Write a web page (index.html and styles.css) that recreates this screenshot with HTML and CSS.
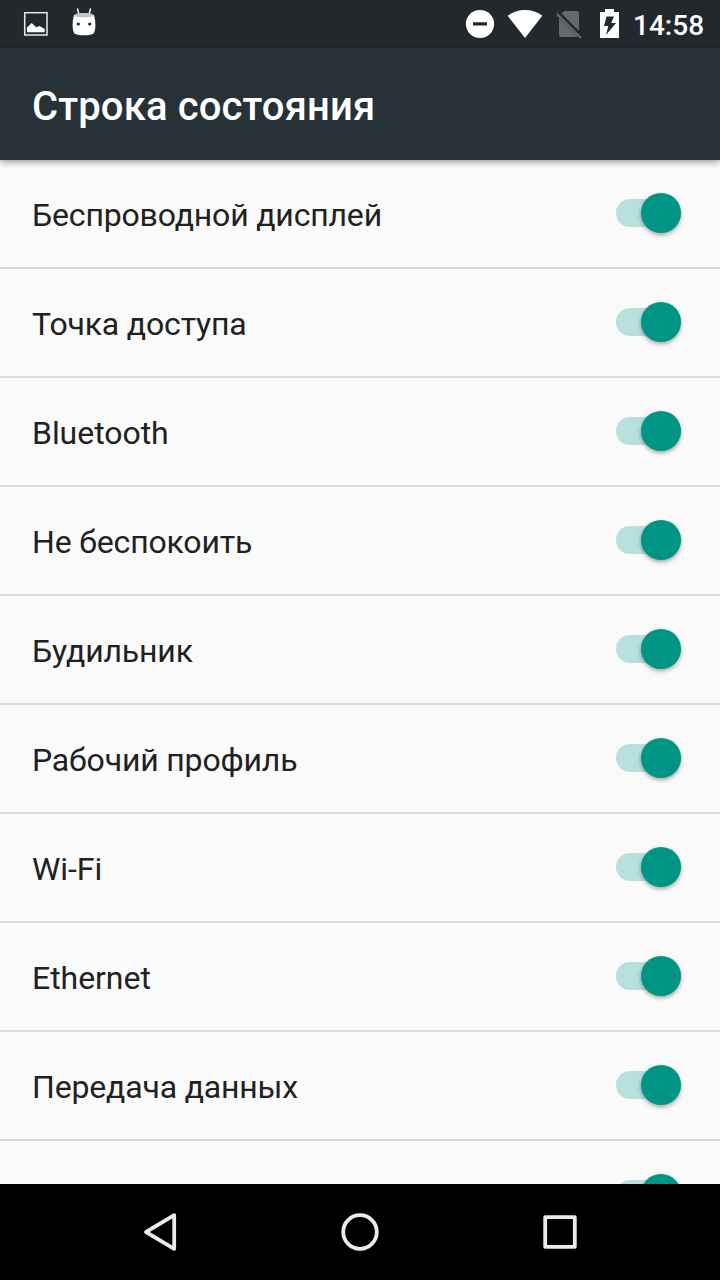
FILE: index.html
```html
<!DOCTYPE html>
<html lang="ru">
<head>
<meta charset="utf-8">
<title>Строка состояния</title>
<link rel="stylesheet" href="styles.css">
</head>
<body>
<div class="screen">
  <div class="status">
    <svg class="status-left" width="120" height="48" viewBox="0 0 120 48">
      <rect x="24.7" y="12.7" width="22.3" height="22.3" fill="none" stroke="#e9eaea" stroke-width="1.5"/>
      <path d="M27 32.300v-4.800l4.700-4.400 4.600 4.200 3.200-1.200 5.200 3v3.200z" fill="#fff"/>
      <path d="M77.500 9l1.500 5.500M90.500 9l-1.500 5.500" stroke="#fff" stroke-width="1.400" stroke-linecap="round"/>
      <path d="M74 15Q84 11.500 94 15Q95.500 20 95.400 25Q95.400 31 93.500 33.500Q91.500 35.300 84 35.300Q76.500 35.300 74.500 33.500Q72.600 31 72.600 25Q72.500 20 74 15z" fill="#fff"/>
      <ellipse cx="84" cy="15.200" rx="9.600" ry="2.300" fill="#c4c4c4"/>
      <circle cx="78.300" cy="24" r="1.600" fill="#23282c"/><circle cx="89.700" cy="24" r="1.600" fill="#23282c"/>
    </svg>
    <svg class="status-right" width="170" height="48" viewBox="455 0 170 48">
      <circle cx="480" cy="24" r="14.100" fill="#fff"/>
      <rect x="473" y="22.300" width="14" height="3.200" fill="#23282c"/>
      <path d="M525 38L507.700 15.800Q515 10 525 10T542.300 15.800z" fill="#fff"/>
      <path d="M564.500 11H576.500Q579 11 579 13.500V32.700L560.500 14.500zM559 18L577.500 36.500Q577 37 576 37H561.500Q559 37 559 34.500z" fill="#66696c"/>
      <path d="M556.800 13.800L581 38" stroke="#66696c" stroke-width="2.300"/>
      <path d="M559.800 13.300L580 33.500" stroke="#23282c" stroke-width="2.200"/>
      <path d="M600 12h5V9h9v3h5v26h-19z" fill="#fff"/>
      <path d="M606.500 16.500H614L611.200 23H616L606 35L608.300 26H604z" fill="#23282c"/>
    </svg>
    <span class="clock">14:58</span>
  </div>
  <header class="toolbar"><h1 class="title">Строка состояния</h1></header>
  <main class="list">
    <div class="row"><span>Беспроводной дисплей</span><i class="switch"></i></div>
    <div class="row"><span>Точка доступа</span><i class="switch"></i></div>
    <div class="row"><span class="latin">Bluetooth</span><i class="switch"></i></div>
    <div class="row"><span>Не беспокоить</span><i class="switch"></i></div>
    <div class="row"><span>Будильник</span><i class="switch"></i></div>
    <div class="row"><span>Рабочий профиль</span><i class="switch"></i></div>
    <div class="row"><span class="latin">Wi-Fi</span><i class="switch"></i></div>
    <div class="row"><span class="latin">Ethernet</span><i class="switch"></i></div>
    <div class="row"><span>Передача данных</span><i class="switch"></i></div>
    <div class="row"><span></span><i class="switch"></i></div>
  </main>
  <nav class="navbar">
    <svg width="720" height="96" viewBox="0 1184 720 96" fill="none" stroke="#ebebeb" stroke-width="3.800" stroke-linejoin="round">
      <path d="M146 1232L174.200 1215.200V1248.800z"/>
      <circle cx="360" cy="1232" r="16.800"/>
      <rect x="545.200" y="1217.200" width="29.600" height="29.600"/>
    </svg>
  </nav>
</div>
</body>
</html>
```
FILE: styles.css
```css
body {
  margin: 0;
  font-family: Roboto, "Noto Sans", sans-serif;
}

.screen {
  display: flex;
  flex-direction: column;
  width: 720px;
  height: 1280px;
  overflow: hidden;
  background: #fafafa;
}

.status {
  display: flex;
  flex: none;
  height: 48px;
  background: #23282c;
}

.status-right {
  margin-left: auto;
}

.clock {
  width: 87px;
  margin-left: 8px;
  font-size: 28px;
  font-weight: 500;
  line-height: 52px;
  color: #fff;
}

.toolbar {
  position: relative;
  z-index: 1;
  display: flex;
  flex: none;
  align-items: center;
  height: 112px;
  padding: 0 32px;
  box-sizing: border-box;
  background: #263238;
  box-shadow: 0 2px 7px rgba(0, 0, 0, 0.4);
}

.title {
  margin: 6px 0 0;
  font-size: 40px;
  font-weight: 500;
  line-height: 48px;
  letter-spacing: 0.13px;
  color: #fff;
}

.list {
  flex: 1;
  min-height: 0;
  overflow: hidden;
}

.row {
  display: flex;
  align-items: flex-start;
  justify-content: space-between;
  box-sizing: border-box;
  height: 109px;
  padding: 35px 39px 0 32px;
  border-bottom: 2px solid #dadada;
  font-size: 32px;
  line-height: 40px;
  letter-spacing: -0.17px;
  color: #212121;
}

.latin {
  letter-spacing: -0.05px;
}

.switch {
  display: flex;
  justify-content: flex-end;
  align-items: center;
  width: 65px;
  height: 28px;
  margin-top: 4px;
  border-radius: 14px;
  background: #b8e0dc;
}

.switch::after {
  content: "";
  width: 40px;
  height: 40px;
  flex: none;
  border-radius: 50%;
  background: #009485;
  box-shadow: 0 2px 4px rgba(0, 0, 0, 0.35);
}

.navbar {
  position: relative;
  z-index: 1;
  flex: none;
  height: 96px;
  background: #000;
}
```
